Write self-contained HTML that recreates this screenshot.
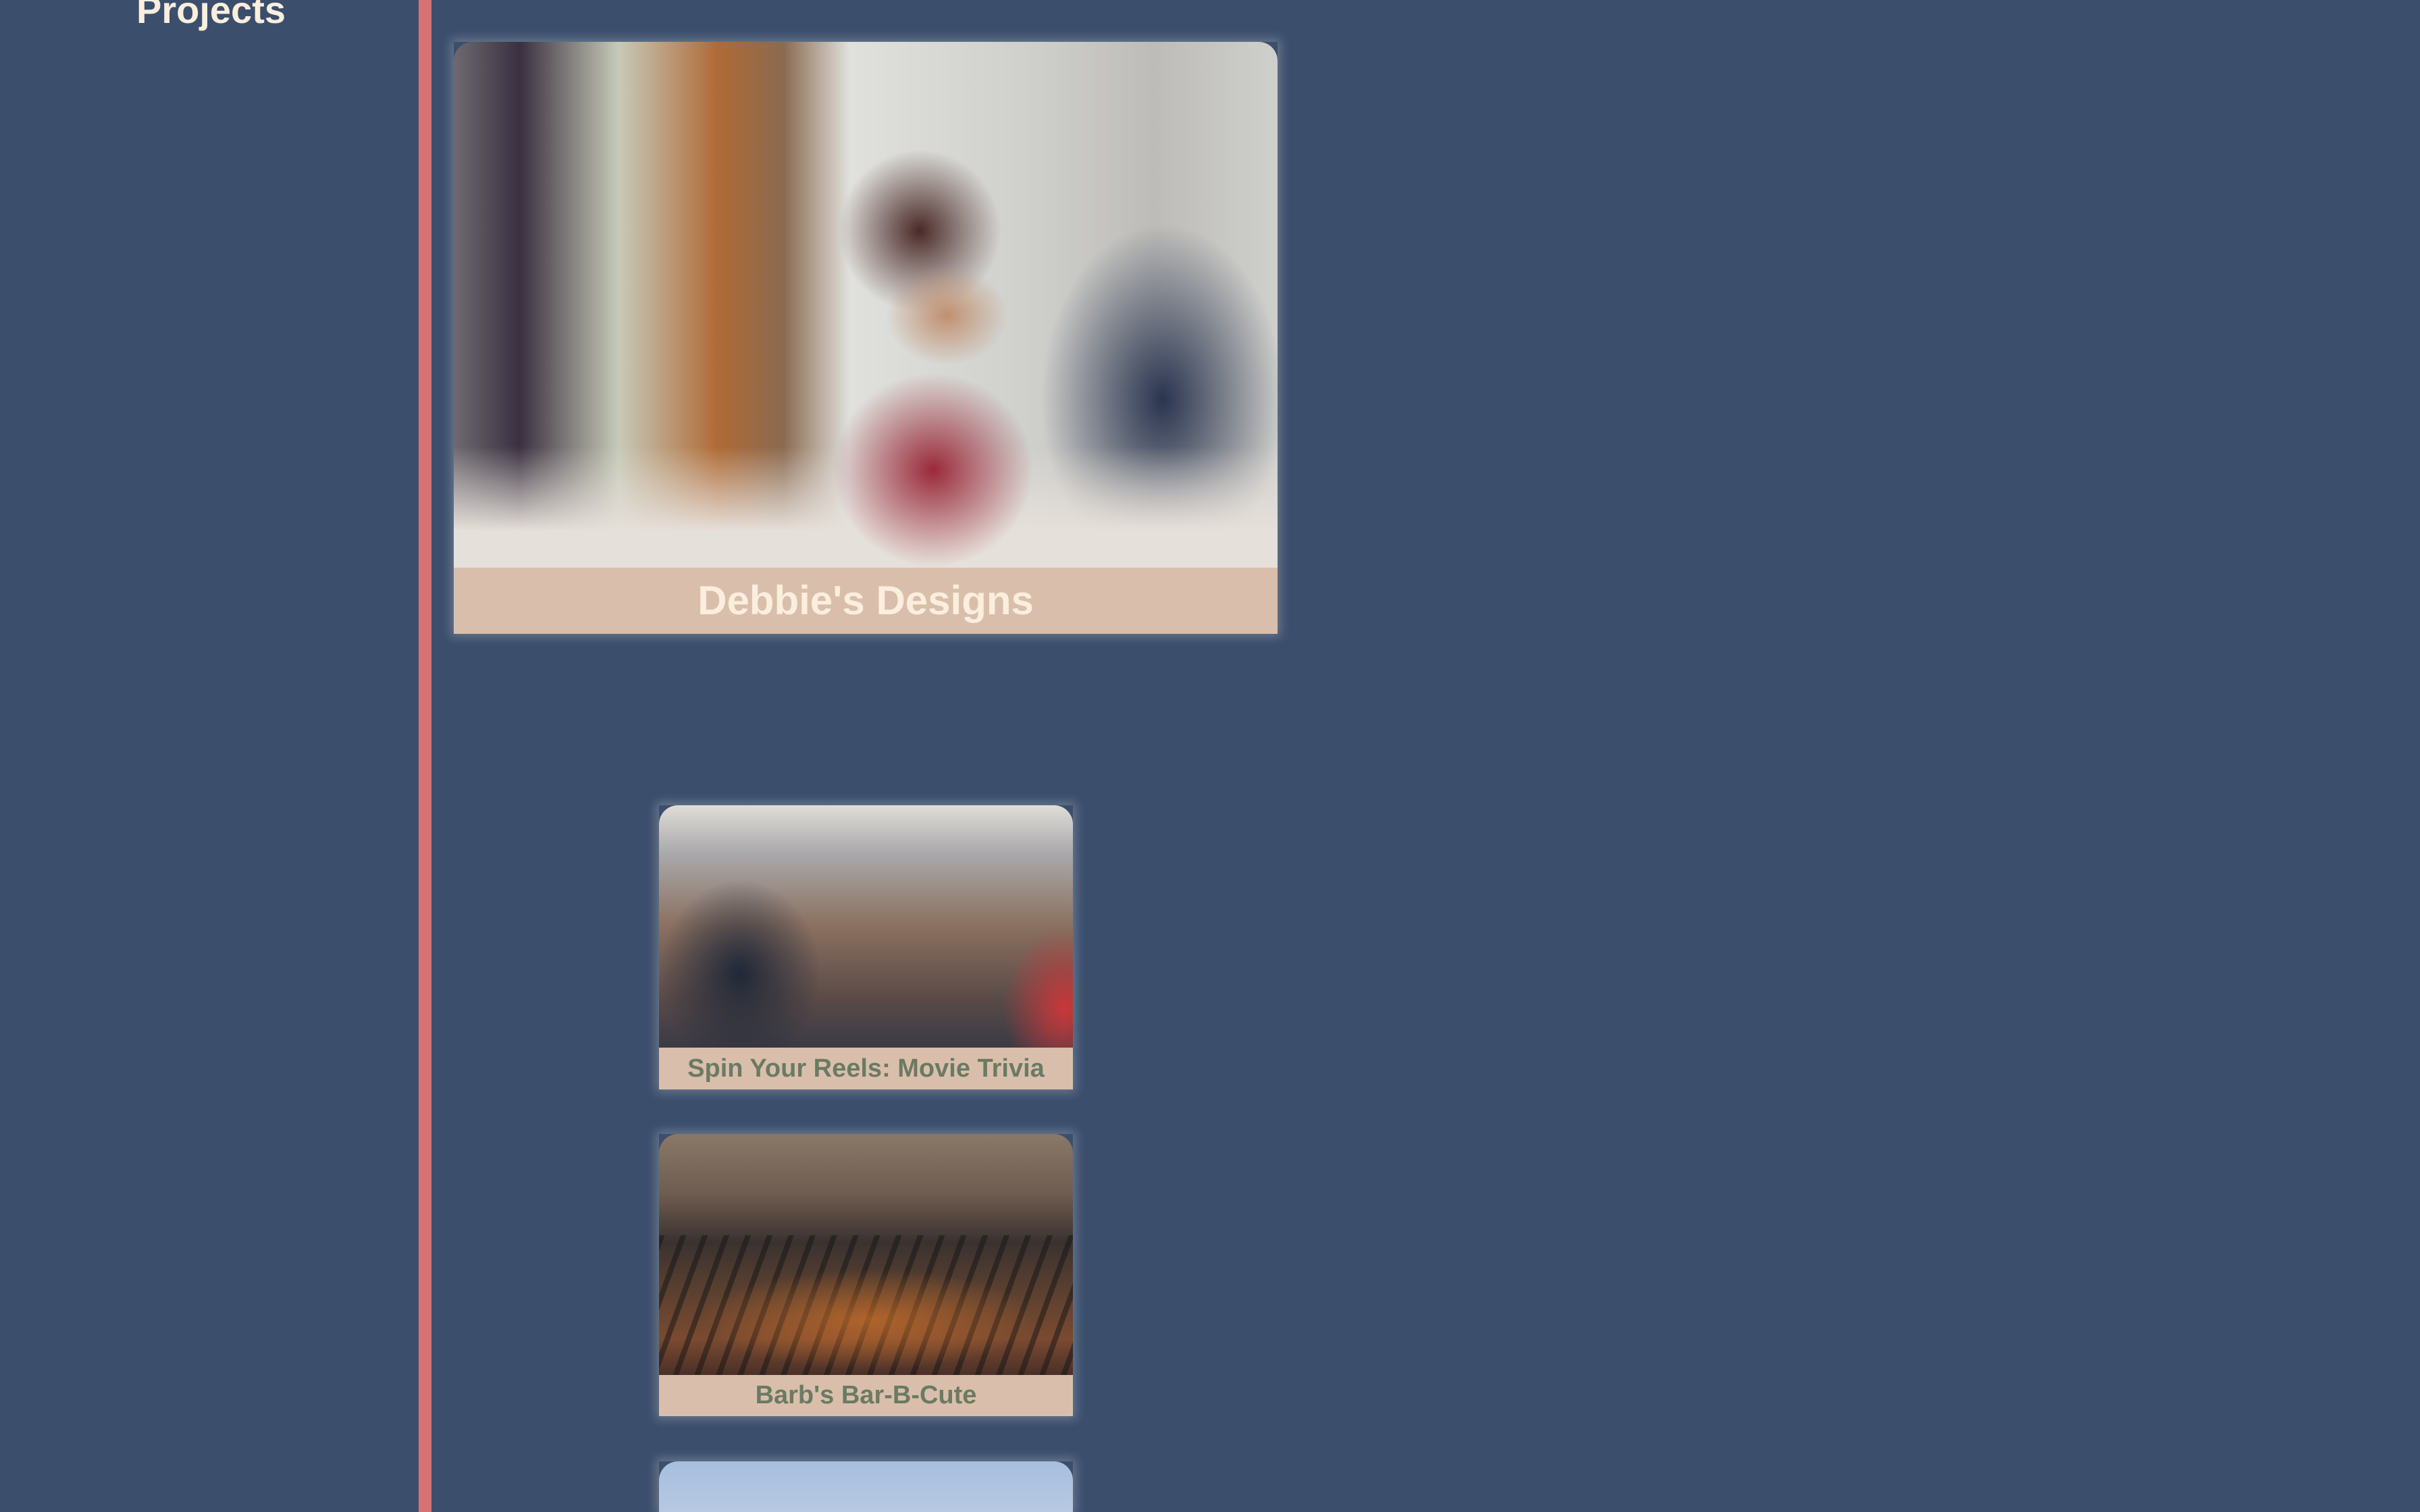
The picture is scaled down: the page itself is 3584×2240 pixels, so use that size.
<!DOCTYPE html>
<html><head><meta charset="utf-8"><style>
html,body{margin:0;padding:0;width:3584px;height:2240px;overflow:hidden}
body{background:#3b4f6d;position:relative;font-family:"Liberation Sans",sans-serif}
.proj{position:absolute;left:202px;top:-20px;font-size:56px;font-weight:bold;color:#fbeedd;line-height:70px}
.bar{position:absolute;left:620px;top:0;width:19px;height:2240px;background:#d67272}
.card{position:absolute;box-shadow:0 0 14px 4px rgba(200,200,210,0.35)}
.img{border-radius:28px 28px 0 0;overflow:hidden;position:relative}
.lbl{background:#d9bfab;text-align:center;white-space:nowrap;font-weight:bold}
</style></head><body>
<div class="proj">Projects</div>
<div class="bar"></div>

<div class="card" style="left:672px;top:62px;width:1220px;">
 <div class="img" style="height:779px;background:
 radial-gradient(ellipse 180px 260px at 1050px 530px,#2a3550 0%,rgba(42,53,80,0) 100%),
 radial-gradient(ellipse 120px 120px at 690px 280px,#4a2a28 0%,rgba(74,42,40,0) 100%),
 linear-gradient(90deg,#6e6a70 0%,#3a3040 8%,#c7cab8 20%,#b06a36 32%,#8a6a50 40%,#e0e0dc 48%,#cfcfcc 70%,#bdbcb8 85%,#cfcfcc 100%);">
  <div style="position:absolute;left:0;bottom:0;width:100%;height:180px;background:linear-gradient(180deg,rgba(220,210,200,0) 0%,#e6e0da 70%)"></div>
  <div style="position:absolute;left:560px;top:490px;width:300px;height:289px;background:radial-gradient(ellipse at center,#9a2a3a 0%,rgba(154,42,58,0) 70%)"></div>
  <div style="position:absolute;left:640px;top:330px;width:180px;height:150px;background:radial-gradient(ellipse at center,#c09070 0%,rgba(192,144,112,0) 70%)"></div>
 </div>
 <div class="lbl" style="height:98px;line-height:98px;font-size:60px;color:#fbeedd">Debbie's Designs</div>
</div>

<div class="card" style="left:976px;top:1193px;width:613px;">
 <div class="img" style="height:359px;background:
 radial-gradient(ellipse 90px 120px at 600px 300px,#c8383a 0%,rgba(200,56,58,0) 100%),
 radial-gradient(ellipse 120px 140px at 120px 250px,#202838 0%,rgba(32,40,56,0) 100%),
 linear-gradient(180deg,#e0ddd8 0%,#a9a9ab 20%,#8a7060 50%,#5a4a48 80%,#3a3a44 100%);"></div>
 <div class="lbl" style="height:62px;line-height:62px;font-size:38px;color:#6b7a63">Spin Your Reels: Movie Trivia</div>
</div>

<div class="card" style="left:976px;top:1680px;width:613px;">
 <div class="img" style="height:357px;background:
 linear-gradient(180deg,#8a7868 0%,#6e5c50 25%,#3a3230 45%,#5a4030 65%,#7a4a30 85%,#4a3028 100%);">
  <div style="position:absolute;left:0;top:150px;width:100%;height:207px;background:repeating-linear-gradient(110deg,rgba(20,20,20,0.5) 0 8px,rgba(0,0,0,0) 8px 30px)"></div>
  <div style="position:absolute;left:60px;top:200px;width:500px;height:150px;background:radial-gradient(ellipse at center,rgba(220,120,40,0.6) 0%,rgba(220,120,40,0) 70%)"></div>
 </div>
 <div class="lbl" style="height:61px;line-height:61px;font-size:38px;color:#6b7a63">Barb's Bar-B-Cute</div>
</div>

<div class="card" style="left:976px;top:2165px;width:613px;height:75px;">
 <div class="img" style="height:75px;background:linear-gradient(180deg,#a7bede 0%,#b7c9e2 100%)"></div>
</div>
</body></html>
